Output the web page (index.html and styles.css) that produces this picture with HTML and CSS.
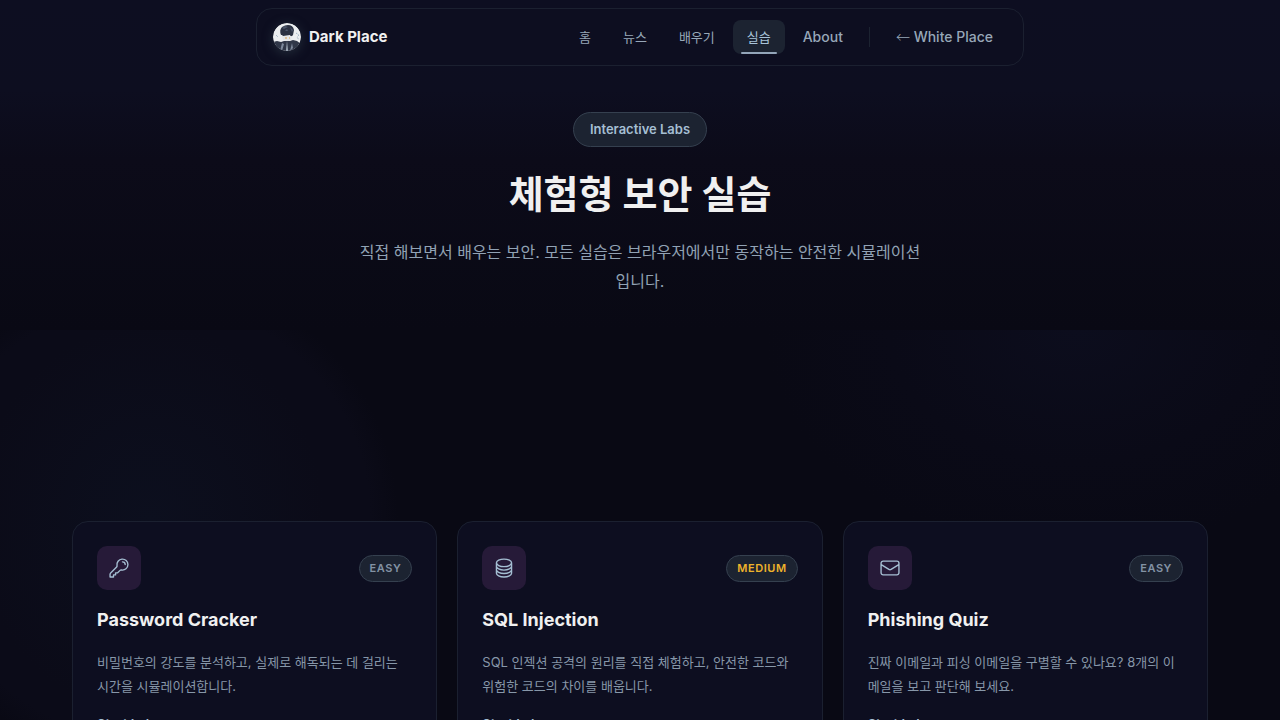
FILE: index.html
```html
<!DOCTYPE html>
<html lang="ko">
<head>
<meta charset="utf-8">
<meta name="viewport" content="width=device-width, initial-scale=1">
<title>Dark Place</title>
<link rel="stylesheet" href="styles.css">
</head>
<body>
<header class="site-header">
  <nav class="navbar">
    <a class="brand" href="#">
      <svg class="avatar" viewBox="0 0 28 28" aria-hidden="true">
        <defs><clipPath id="round"><circle cx="14" cy="14" r="14"/></clipPath></defs>
        <g clip-path="url(#round)">
          <rect width="28" height="28" fill="#eceef0"/>
          <path d="M0 19l4-1 4 1 3-1h6l3-1 4 1 4 3v7H0z" fill="#303748"/>
          <path d="M8 12Q6 7 9 4q3-2 6-2 5 0 6 5l-1 5-2 2-1-2-7 1-1-1z" fill="#2b3142"/>
          <path d="M9 5l3-2 3 1-4 2zM17 4l3 3-1 2zM12 8l2-2 1 2z" fill="#4b556a"/>
          <path d="M9 13h10l-1 4-3 1-5-1z" fill="#e4e6e8"/>
          <path d="M12 15h2M16 15h1" stroke="#d9a253"/>
          <path d="M9 20l2 1-2 7H7zM19 20l1 5-3 3z" fill="#7e899b"/>
          <path d="M14 18l1 10h-2z" fill="#a8b4c0"/>
          <path d="M23 10l3 2-2 2 2 3M3 12l2 2" stroke="#91a8ba" stroke-dasharray="1 1" fill="none"/>
        </g>
      </svg>
      <span>Dark Place</span>
    </a>
    <div class="nav-links">
      <a class="nav-link ko" href="#">홈</a>
      <a class="nav-link ko" href="#">뉴스</a>
      <a class="nav-link ko" href="#">배우기</a>
      <a class="nav-link ko active" href="#" aria-current="page">실습</a>
      <a class="nav-link" href="#">About</a>
      <span class="divider"></span>
      <a class="nav-link" href="#"><span class="arrow">←</span> White Place</a>
    </div>
  </nav>
</header>
<main>
  <section class="hero">
    <span class="hero-badge">Interactive Labs</span>
    <h1>체험형 보안 실습</h1>
    <p>직접 해보면서 배우는 보안. 모든 실습은 브라우저에서만 동작하는 안전한 시뮬레이션입니다.</p>
  </section>
  <section class="labs">
    <div class="lab-grid">
      <article class="card">
        <div class="card-top">
          <span class="card-icon"><svg viewBox="0 0 24 24" aria-hidden="true"><path d="M15.75 5.25a3 3 0 0 1 3 3m3 0a6 6 0 0 1-7.029 5.912c-.563-.097-1.159.026-1.563.43L10.5 17.25H8.25v2.25H6v2.25H2.25v-2.818c0-.597.237-1.17.659-1.591l6.499-6.499c.404-.404.527-1 .43-1.563A6 6 0 1 1 21.75 8.25Z"/></svg></span>
          <span class="level">EASY</span>
        </div>
        <h2>Password Cracker</h2>
        <p>비밀번호의 강도를 분석하고, 실제로 해독되는 데 걸리는 시간을 시뮬레이션합니다.</p>
        <a class="start" href="#">Start Lab</a>
      </article>
      <article class="card">
        <div class="card-top">
          <span class="card-icon"><svg viewBox="0 0 24 24" aria-hidden="true"><path d="M20.25 6.375c0 2.278-3.694 4.125-8.25 4.125S3.75 8.653 3.75 6.375m16.5 0c0-2.278-3.694-4.125-8.25-4.125S3.75 4.097 3.75 6.375m16.5 0v11.25c0 2.278-3.694 4.125-8.25 4.125s-8.25-1.847-8.25-4.125V6.375m16.5 0v3.75m-16.5-3.75v3.75m16.5 0v3.75C20.25 16.153 16.556 18 12 18s-8.25-1.847-8.25-4.125v-3.75m16.5 0c0 2.278-3.694 4.125-8.25 4.125s-8.25-1.847-8.25-4.125"/></svg></span>
          <span class="level medium">MEDIUM</span>
        </div>
        <h2>SQL Injection</h2>
        <p>SQL 인젝션 공격의 원리를 직접 체험하고, 안전한 코드와 위험한 코드의 차이를 배웁니다.</p>
        <a class="start" href="#">Start Lab</a>
      </article>
      <article class="card">
        <div class="card-top">
          <span class="card-icon"><svg viewBox="0 0 24 24" aria-hidden="true"><path d="M21.75 6.75v10.5a2.25 2.25 0 0 1-2.25 2.25h-15a2.25 2.25 0 0 1-2.25-2.25V6.75m19.5 0A2.25 2.25 0 0 0 19.5 4.5h-15a2.25 2.25 0 0 0-2.25 2.25m19.5 0v.243a2.25 2.25 0 0 1-1.07 1.916l-7.5 4.615a2.25 2.25 0 0 1-2.36 0L3.32 8.91a2.25 2.25 0 0 1-1.07-1.916V6.75"/></svg></span>
          <span class="level">EASY</span>
        </div>
        <h2>Phishing Quiz</h2>
        <p>진짜 이메일과 피싱 이메일을 구별할 수 있나요? 8개의 이메일을 보고 판단해 보세요.</p>
        <a class="start" href="#">Start Lab</a>
      </article>
    </div>
  </section>
</main>
</body>
</html>
```
FILE: styles.css
```css
* { box-sizing: border-box; }
html { background: #090914; }
body {
  margin: 0;
  color: #f0f0f0;
  font-family: Inter, "Noto Sans CJK KR", sans-serif;
  font-size: 14px;
  background: linear-gradient(#0d0e21 0, #0d0e20 90px, #0c0b19 160px, #090914 330px);
  overflow-x: hidden;
}
a { color: inherit; text-decoration: none; }
.site-header { padding: 8px 16px 0; }
.navbar {
  display: flex;
  align-items: center;
  justify-content: space-between;
  max-width: 768px;
  height: 58px;
  margin: 0 auto;
  padding: 0 16px;
  border: 1px solid #1b2030;
  border-radius: 16px;
  background: #0d0e20;
}
.brand {
  display: flex;
  align-items: center;
  gap: 8px;
  font-size: 15px;
  font-weight: 700;
  line-height: 28px;
}
.avatar {
  width: 28px;
  height: 28px;
  border-radius: 50%;
  box-shadow: 0 2px 8px 2px #1c2332;
}
.nav-links { display: flex; align-items: center; gap: 4px; }
.nav-link {
  position: relative;
  padding: 0 14px;
  border-radius: 8px;
  line-height: 34px;
  font-weight: 500;
  color: #97a7b8;
}
.nav-link.ko { font-size: 13px; font-weight: 400; }
.arrow { font-family: "Noto Sans CJK KR", sans-serif; font-weight: 300; line-height: 20px; }
.nav-link.active { background: #1c2331; color: #a9c4d9; }
.nav-link.active::after {
  content: "";
  position: absolute;
  right: 8px;
  bottom: 0;
  left: 8px;
  height: 2px;
  border-radius: 1px;
  background: #93a5b9;
}
.divider { width: 1px; height: 20px; margin: 0 8px; background: #1c2331; }
.hero {
  display: flex;
  flex-direction: column;
  align-items: center;
  padding: 46px 24px 34px;
  text-align: center;
}
.hero-badge {
  padding: 0 16px;
  border: 1px solid #35404f;
  border-radius: 18px;
  background: #1c2331;
  color: #a5bfd3;
  font-size: 13px;
  font-weight: 600;
  line-height: 33px;
}
.hero h1 {
  margin: 21px 0 18px;
  font-size: 38px;
  font-weight: 700;
  line-height: 52px;
}
.hero p {
  max-width: 568px;
  margin: 0;
  color: #91a2b4;
  font-size: 16px;
  line-height: 29px;
}
.labs {
  padding: 191px 32px 64px;
  background:
    radial-gradient(ellipse 250px 280px at 150px 190px, #0c0f1e 0, transparent 70%),
    radial-gradient(ellipse 400px 400px at 150px 190px, #0b0b18 0, #0b0b18 55%, transparent 62%),
    radial-gradient(ellipse 310px 220px at 84% 0, #0c0d1d 0, #0a0a17 60%, transparent 100%);
}
.lab-grid {
  display: grid;
  grid-template-columns: repeat(3, 1fr);
  gap: 20px;
  max-width: 1136px;
  margin: 0 auto;
}
.card {
  padding: 24px;
  border: 1px solid #1b2030;
  border-radius: 16px;
  background: #0d0e20;
}
.card-top { display: flex; align-items: center; justify-content: space-between; }
.card-icon {
  display: grid;
  place-items: center;
  width: 44px;
  height: 44px;
  border-radius: 10px;
  background: #261a38;
}
.card-icon svg {
  width: 22px;
  height: 22px;
  fill: none;
  stroke: #a5bfd3;
  stroke-width: 1.5;
  stroke-linecap: round;
  stroke-linejoin: round;
}
.level {
  padding: 0 10px;
  border: 1px solid #35404f;
  border-radius: 14px;
  background: #1c2331;
  color: #8292a4;
  font-size: 11px;
  font-weight: 600;
  letter-spacing: 0.05em;
  line-height: 25px;
}
.level.medium { color: #efb32b; }
.card h2 {
  margin: 16px 0;
  font-size: 18px;
  font-weight: 700;
  line-height: 28px;
}
.card p {
  margin: 0 0 14px;
  color: #8797a9;
  font-size: 13px;
  line-height: 24px;
}
.start {
  display: inline-block;
  color: #a5bfd3;
  font-size: 13px;
  font-weight: 600;
  line-height: 24px;
}
@media (max-width: 900px) {
  .lab-grid { grid-template-columns: 1fr; }
  .navbar { height: auto; flex-wrap: wrap; padding: 11px 15px; }
  .nav-links { flex-wrap: wrap; }
}
```
